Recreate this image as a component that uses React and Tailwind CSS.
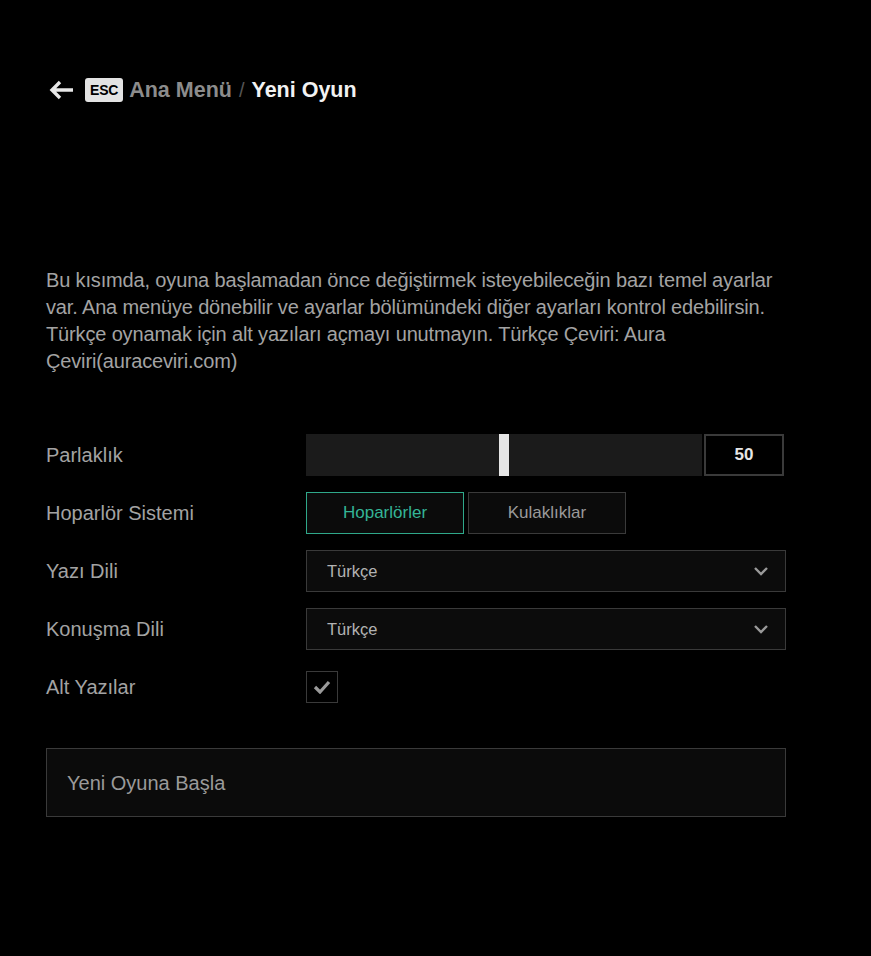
import { useState } from 'react';

function ArrowLeft() {
    return (
        <svg width="25" height="20" viewBox="0 0 25 20" className="text-[#e8e8e8]">
            <path d="M11 2 L3 10 L11 18 M3 10 H24" fill="none" stroke="currentColor" strokeWidth="3.4" strokeLinejoin="miter" />
        </svg>
    );
}

function Chevron() {
    return (
        <svg width="16" height="10" viewBox="0 0 16 10" className="text-[#9a9a9a]">
            <path d="M2 2 L8 8 L14 2" fill="none" stroke="currentColor" strokeWidth="2.4" />
        </svg>
    );
}

function Row({ label, children }) {
    return (
        <div className="flex items-center h-[42px]">
            <div className="w-[260px] text-[20px] text-[#a3a3a3]">{label}</div>
            <div className="flex-1 flex items-center">{children}</div>
        </div>
    );
}

function Select({ value }) {
    return (
        <div className="w-[480px] h-[42px] flex items-center justify-between pl-[20px] pr-[16px] bg-[#0c0c0c] border border-[#3a3a3a] text-[16.5px] text-[#b3b3b3]">
            <span>{value}</span>
            <Chevron />
        </div>
    );
}

export default function App() {
    const [speaker, setSpeaker] = useState('hoparlor');
    const [subs, setSubs] = useState(true);

    return (
        <div className="min-h-[956px] w-full bg-black font-['Liberation_Sans',Arial,sans-serif] px-[46px] pt-[76px]">
            {/* breadcrumb */}
            <div className="flex items-center h-[28px]">
                <span className="ml-[3px]"><ArrowLeft /></span>
                <span className="ml-[11px] h-[24px] px-[5px] flex items-center rounded-[3px] bg-[#e3e3e3] text-black text-[14px] font-bold tracking-[-0.2px]">ESC</span>
                <span className="ml-[6px] text-[21.5px] font-bold text-[#8c8c8c]">Ana Menü</span>
                <span className="mx-[7px] text-[20px] text-[#555]">/</span>
                <span className="text-[21.5px] font-bold text-[#f2f2f2]">Yeni Oyun</span>
            </div>

            <p className="mt-[163px] w-[748px] text-[20px] leading-[27px] tracking-[-0.15px] text-[#a3a3a3]">
                Bu kısımda, oyuna başlamadan önce değiştirmek isteyebileceğin bazı temel ayarlar var. Ana menüye dönebilir ve ayarlar bölümündeki diğer ayarları kontrol edebilirsin. Türkçe oynamak için alt yazıları açmayı unutmayın. Türkçe Çeviri: Aura Çeviri(auraceviri.com)
            </p>

            <div className="mt-[59px] flex flex-col gap-[16px]">
                <Row label="Parlaklık">
                    <div className="relative w-[396px] h-[42px] bg-[#1b1b1b]">
                        <div className="absolute top-0 bottom-0 left-[193px] w-[10px] bg-[#e6e6e6]" />
                    </div>
                    <div className="ml-[2px] w-[80px] h-[42px] flex items-center justify-center border-2 border-[#3a3a3a] bg-black text-[17px] font-bold text-[#e6e6e6]">50</div>
                </Row>
                <Row label="Hoparlör Sistemi">
                    <button
                        onClick={() => setSpeaker('hoparlor')}
                        className={`w-[158px] h-[42px] bg-[#0b0b0b] border text-[17px] ${speaker === 'hoparlor' ? 'border-[#2fa88a] text-[#34b597]' : 'border-[#3a3a3a] text-[#9a9a9a]'}`}>
                        Hoparlörler
                    </button>
                    <button
                        onClick={() => setSpeaker('kulaklik')}
                        className={`ml-[4px] w-[158px] h-[42px] bg-[#0b0b0b] border text-[17px] ${speaker === 'kulaklik' ? 'border-[#2fa88a] text-[#34b597]' : 'border-[#3a3a3a] text-[#9a9a9a]'}`}>
                        Kulaklıklar
                    </button>
                </Row>
                <Row label="Yazı Dili">
                    <Select value="Türkçe" />
                </Row>
                <Row label="Konuşma Dili">
                    <Select value="Türkçe" />
                </Row>
                <Row label="Alt Yazılar">
                    <button onClick={() => setSubs(!subs)} className="w-[32px] h-[32px] flex items-center justify-center border border-[#3a3a3a] bg-black">
                        {subs && (
                            <svg width="18" height="14" viewBox="0 0 18 14" className="text-[#9a9a9a]">
                                <path d="M2 7 L7 12 L16 2" fill="none" stroke="currentColor" strokeWidth="3.2" />
                            </svg>
                        )}
                    </button>
                </Row>
            </div>

            <button className="mt-[40px] w-[740px] h-[69px] flex items-center pl-[20px] bg-[#0b0b0b] border border-[#3a3a3a] text-[20px] text-[#9a9a9a]">
                Yeni Oyuna Başla
            </button>
        </div>
    );
}
